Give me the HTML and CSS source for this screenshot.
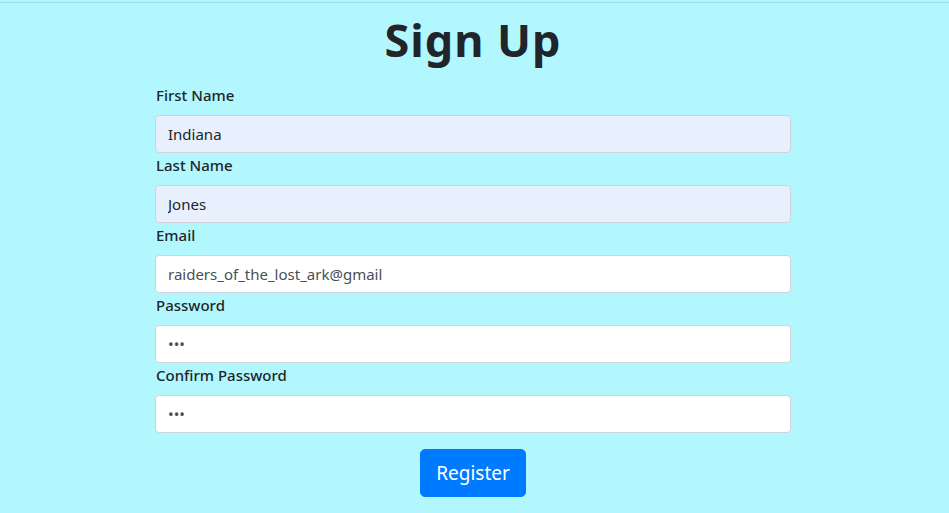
FILE: index.html
```html
<!DOCTYPE html>
<html lang="en">
<head>
<meta charset="utf-8">
<title>Sign Up</title>
<link rel="stylesheet" href="styles.css">
</head>
<body>
<div class="topline"></div>
<main class="page">
  <h1 class="title">Sign Up</h1>
  <form class="form">
    <label class="label" for="fn">First Name</label>
    <input class="input autofill" id="fn" type="text" value="Indiana">
    <label class="label" for="ln">Last Name</label>
    <input class="input autofill" id="ln" type="text" value="Jones">
    <label class="label" for="em">Email</label>
    <input class="input" id="em" type="text" value="raiders_of_the_lost_ark@gmail">
    <label class="label" for="pw">Password</label>
    <input class="input" id="pw" type="password" value="abc">
    <label class="label" for="cpw">Confirm Password</label>
    <input class="input" id="cpw" type="password" value="abc">
    <div class="actions">
      <button class="btn" type="button">Register</button>
    </div>
  </form>
</main>
</body>
</html>
```
FILE: styles.css
```css
html, body {
  margin: 0;
  padding: 0;
  background: #b3f7fe;
  height: 100%;
}
body {
  font-family: "Noto Sans", "Open Sans", sans-serif;
  color: #212529;
  font-size: 16px;
  line-height: 1.5;
}
.topline {
  height: 2px;
  border-bottom: 1px solid #9fdfe6;
}
.page {
  display: flex;
  flex-direction: column;
  align-items: center;
  padding-left: 0;
  padding-right: 3px;
}
.title {
  margin: 11px 0 17px;
  font-size: 45px;
  line-height: 52px;
  letter-spacing: 1px;
  font-weight: 700;
  color: #212529;
}
.form {
  width: 636px;
  display: flex;
  flex-direction: column;
}
.label {
  font-size: 15px;
  line-height: 24px;
  font-weight: 500;
  margin-bottom: 8px;
  padding-left: 1px;
}
.input {
  box-sizing: border-box;
  height: 38px;
  width: 100%;
  padding: 6px 12px;
  font-family: inherit;
  font-size: 15px;
  color: #495057;
  background: #fff;
  border: 1px solid #ced4da;
  border-radius: 4px;
  outline: none;
}
.input.autofill {
  background: #e8f0fe;
  color: #212529;
}
.actions {
  display: flex;
  justify-content: center;
  margin-top: 16px;
}
.btn {
  height: 48px;
  width: 106px;
  padding: 0;
  font-family: inherit;
  font-size: 19px;
  color: #fff;
  background: #007bff;
  border: 1px solid #007bff;
  border-radius: 5px;
}
```
